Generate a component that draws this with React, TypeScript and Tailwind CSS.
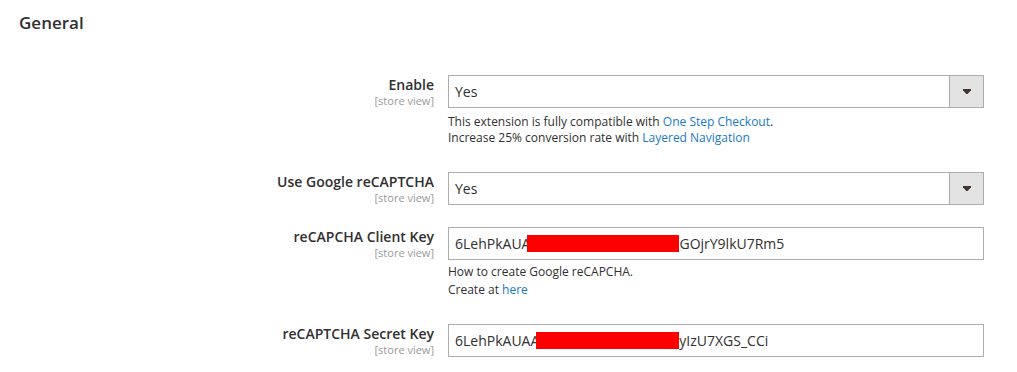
import React from "react";

function Label({ title }: { title: string }) {
  return (
    <div className="w-[434px] shrink-0 pt-[1px] text-right">
      <div className="text-[14px] font-semibold leading-[18px] text-[#303030]">{title}</div>
      <div className="text-[11px] leading-[14px] text-[#999]">[store view]</div>
    </div>
  );
}

function Select({ value }: { value: string }) {
  return (
    <div className="flex h-[33px] w-[536px] border border-[#adadad] bg-white">
      <div className="flex flex-1 items-center pl-[6px] text-[14px] text-[#303030]">{value}</div>
      <div className="flex w-[34px] items-center justify-center border-l border-[#adadad] bg-[#e3e3e3]">
        <svg width="8" height="5" viewBox="0 0 8 5">
          <path d="M0 0h8v1.3L4.6 5H3.4L0 1.3z" fill="#41362f" />
        </svg>
      </div>
    </div>
  );
}

function KeyInput({ start, end, gap }: { start: string; end: string; gap: number }) {
  return (
    <div className="flex h-[33px] w-[536px] items-center border border-[#adadad] bg-white pl-[6px] text-[14px] text-[#303030]">
      <span>{start}</span>
      <span className="-ml-[3px] inline-block h-[17px] bg-[#ff0000]" style={{ width: gap }} />
      <span>{end}</span>
    </div>
  );
}

const link = "text-[#1979c3]";

export default function App() {
  return (
    <div className="min-h-[372px] w-[1017px] bg-white font-['Open_Sans',sans-serif]">
      <h2 className="px-[19px] pt-[12px] text-[17px] font-semibold leading-[22px] text-[#303030]">General</h2>

      <div className="mt-[41px] flex flex-col">
        <div className="flex gap-[14px]">
          <Label title="Enable" />
          <div>
            <Select value="Yes" />
            <div className="mt-[6px] text-[12px] leading-[16px] text-[#303030]">
              <div>
                This extension is fully compatible with <span className={link}>One Step Checkout</span>.
              </div>
              <div>
                Increase 25% conversion rate with <span className={link}>Layered Navigation</span>
              </div>
            </div>
          </div>
        </div>

        <div className="mt-[26px] flex gap-[14px]">
          <Label title="Use Google reCAPTCHA" />
          <Select value="Yes" />
        </div>

        <div className="mt-[22px] flex gap-[14px]">
          <Label title="reCAPCHA Client Key" />
          <div>
            <KeyInput start="6LehPkAUA" end="GOjrY9lkU7Rm5" gap={152} />
            <div className="mt-[3px] text-[12px] leading-[18px] text-[#303030]">
              <div>How to create Google reCAPCHA.</div>
              <div>
                Create at <span className={link}>here</span>
              </div>
            </div>
          </div>
        </div>

        <div className="mt-[25px] flex gap-[14px]">
          <Label title="reCAPTCHA Secret Key" />
          <KeyInput start="6LehPkAUAA" end="yIzU7XGS_CCi" gap={143} />
        </div>
      </div>
    </div>
  );
}
